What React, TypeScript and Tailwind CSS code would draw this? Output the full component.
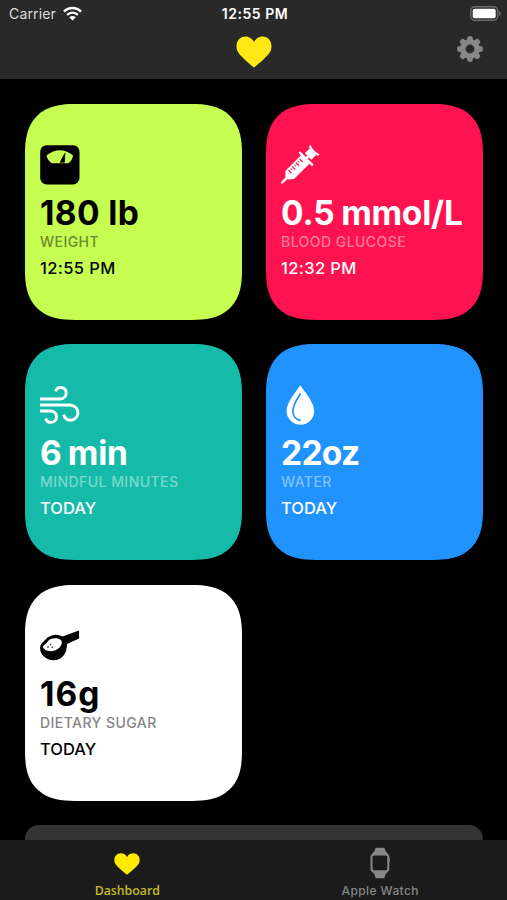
import type { ReactNode } from "react";

const HEART =
  "M18 31.5 C15.5 29.5 3 19.5 1.1 14.2 C-1.2 6.800 3.200 0.500 9.300 0.500 C13.500 0.500 16.700 3 18 6 C19.300 3 22.500 0.500 26.700 0.500 C32.800 0.500 37.200 6.800 34.900 14.200 C33 19.500 20.500 29.500 18 31.500 Z";

function Heart({ className }: { className: string }) {
  return (
    <svg viewBox="0 0 36 32" preserveAspectRatio="none" className={className}>
      <path d={HEART} fill="currentColor" />
    </svg>
  );
}

function Wifi() {
  return (
    <svg viewBox="0 0 18 14" className="ml-[7px] h-[15px] w-[19px]" fill="none" stroke="#fff">
      <path d="M0.900 5.200 C5.500 0.700 12.500 0.700 17.100 5.200" strokeWidth="2.500" />
      <path d="M3.900 8.300 C6.900 5.500 11.100 5.500 14.100 8.300" strokeWidth="2.300" />
      <path d="M9 13.600 L5.900 10.500 C7.700 8.900 10.300 8.900 12.100 10.500 Z" fill="#fff" stroke="none" />
    </svg>
  );
}

function Battery() {
  return (
    <svg viewBox="0 0 31 15" className="h-[15px] w-[31px]">
      <rect x="0.800" y="0.800" width="26.800" height="13.400" rx="4" fill="none" stroke="#6b6b6b" strokeWidth="1.400" />
      <rect x="2.700" y="2.700" width="23" height="9.600" rx="2" fill="#fff" />
      <path d="M28.900 5 Q31 6 31 7.500 Q31 9 28.900 10 Z" fill="#6b6b6b" />
    </svg>
  );
}

function Gear() {
  const angles = [0, 45, 90, 135, 180, 225, 270, 315];
  return (
    <svg viewBox="-13 -13 26 26" className="h-[26px] w-[26px]">
      <circle r="7.100" fill="none" stroke="#878787" strokeWidth="5.400" />
      {angles.map((a) => (
        <path
          key={a}
          d="M-3.300 -8.800 L-2.400 -12 Q-2.200 -12.800 -1.400 -12.800 L1.400 -12.800 Q2.200 -12.800 2.400 -12 L3.300 -8.800 Z"
          fill="#878787"
          transform={`rotate(${a})`}
        />
      ))}
    </svg>
  );
}

function ScaleIcon() {
  return (
    <svg viewBox="0 0 40 40" className="h-10 w-10">
      <rect x="0.200" y="0.200" width="39.300" height="39.300" rx="6.500" fill="#000" />
      <path d="M6.500 10.500 Q19.800 0 33.100 10.500 Q32.200 15.800 28.300 18.300 L11.900 18.300 Q7.600 15.800 6.500 10.500 Z" fill="#c5fd51" />
      <path d="M20.200 17.300 L24.900 8.300 L24.400 17.300 Z" fill="#000" stroke="#000" strokeWidth="0.800" strokeLinejoin="round" />
    </svg>
  );
}

function SyringeIcon() {
  return (
    <svg viewBox="0 0 40 40" className="h-10 w-10">
      <g transform="translate(0.300 38.400) rotate(-45) scale(0.960)" fill="#fff">
        <path d="M0 -1 L9.500 -1.500 L9.500 1.500 L0 1 Z" />
        <path d="M8 -2.200 L12.500 -6.200 H36 V6.200 H12.500 L8 2.200 Z" />
        <rect x="35.200" y="-10" width="2.400" height="20" rx="0.800" />
        <path d="M39.500 -4.800 H46.500 V4.800 H39.500 Z" />
        <rect x="37" y="-1.500" width="3" height="3" />
        <path d="M47 -6.800 H49.800 Q48.200 -3 48.200 0 Q48.200 3 49.800 6.800 H47 Z" />
        <rect x="45.500" y="-3.800" width="3" height="7.600" />
        <g stroke="#ff1250" strokeWidth="1.300">
          <path d="M15 -4.500 V0 M20.500 -4.500 V0 M26 -4.500 V0 M31.500 -4.500 V0" />
          <path d="M17.800 -4 V-2 M23.300 -4 V-2 M28.800 -4 V-2" strokeWidth="1" />
        </g>
      </g>
    </svg>
  );
}

function WindIcon() {
  return (
    <svg viewBox="0 0 40 40" className="h-10 w-10" fill="none" stroke="#fff" strokeWidth="2.900">
      <path d="M0 14 H20 C24 14 26.200 11 26.200 7.800 C26.200 4.500 23.700 2.500 20.800 2.500 C18.300 2.500 16.300 4 15.600 6.300" />
      <path d="M0 20 H29.500 C34.500 20 38 23.500 38 27.800 C38 32 34.600 35.200 30.700 35.200 C27.300 35.200 24.500 33 23.700 29.700" />
      <path d="M0 26 H10 C14.200 26 16.500 28.500 16.500 31.800 C16.500 35.100 14 37.400 11 37.400 C8.300 37.400 6.300 35.800 5.700 33.300" />
    </svg>
  );
}

function WaterIcon() {
  return (
    <svg viewBox="0 0 40 40" className="h-10 w-10">
      <path d="M19.300 0.300 C24 7.500 33.200 17.500 33.200 26 C33.200 34 27 39.700 19.500 39.700 C12 39.700 5.600 34 5.600 26 C5.600 17.500 14.700 7.500 19.300 0.300 Z" fill="#fff" />
      <path d="M19.300 9 C14 17 11.500 21.500 11.900 26.500 C12.300 31.500 15.300 34.500 19 35.300" fill="none" stroke="#2492ff" strokeWidth="1.700" strokeLinecap="round" />
    </svg>
  );
}

function SpoonIcon() {
  return (
    <svg viewBox="0 0 40 40" className="h-10 w-10">
      <path d="M1 18 L7.500 11.500 Q15 6.500 22.500 10.500 L38.200 4.800 Q39.100 4.600 39.100 5.500 V12.500 L27 18 C27 28.500 21.500 34.200 13.300 34.200 C4.500 34.200 -2.500 26 1 18 Z" fill="#000" />
      <path d="M2.700 20.800 C4.200 18.500 6.200 17.800 7.700 15.500 C10.200 12 17 11.300 20.500 13.800 C24 16.500 20.500 22.500 15 24.500 C9.500 26.200 3.700 24.500 2.700 20.800 Z" fill="#fff" />
      <g fill="#555">
        <circle cx="10.600" cy="18.300" r="0.900" />
        <circle cx="8" cy="21" r="0.900" />
        <circle cx="12.300" cy="21.200" r="0.900" />
      </g>
    </svg>
  );
}

function WatchIcon() {
  return (
    <svg viewBox="0 0 20 32" className="h-8 w-5">
      <path d="M5.600 0.700 H14.400 Q15.300 5 17.800 6.500 V25 Q15.300 26.500 14.400 31.300 H5.600 Q4.700 26.500 2.200 25 V6.500 Q4.700 5 5.600 0.700 Z" fill="#878787" />
      <rect x="1.500" y="7.500" width="16.800" height="16.800" rx="2.600" fill="#1b1b1b" stroke="#878787" strokeWidth="2" />
      <path d="M19.500 11 V15" stroke="#878787" strokeWidth="0.800" />
    </svg>
  );
}

interface CardProps {
  icon: ReactNode;
  value: string;
  label: string;
  time: string;
  tone: string;
  muted: string;
  valueSpacing: string;
  timeSpacing: string;
}

function Card({ icon, value, label, time, tone, muted, valueSpacing, timeSpacing }: CardProps) {
  return (
    <section
      className={`h-[216px] rounded-[50px] pt-[41px] pl-[15px] whitespace-nowrap [corner-shape:superellipse(1.35)] ${tone}`}
    >
      {icon}
      <p className={`mt-[8px] h-10 text-[33.500px] leading-10 font-bold ${valueSpacing}`}>{value}</p>
      <p className={`h-[18px] text-[14px] leading-[18px] font-medium tracking-[0.450px] ${muted}`}>{label}</p>
      <p className={`mt-[5px] h-6 text-[16.500px] leading-6 font-medium ${timeSpacing}`}>{time}</p>
    </section>
  );
}

export default function App() {
  return (
    <div className="flex h-[900px] w-[507px] flex-col overflow-hidden bg-black font-['Inter','Liberation_Sans',sans-serif]">
      <header className="h-[79px] shrink-0 bg-[#292929]">
        <div className="grid h-[27px] grid-cols-[1fr_auto_1fr] items-center pr-[6px] pl-[9px] text-[14px] text-white">
          <div className="flex items-center text-[#dedede]">
            <span className="tracking-[0.150px]">Carrier</span>
            <Wifi />
          </div>
          <span className="text-center font-semibold tracking-[0.550px]">12:55 PM</span>
          <div className="flex justify-end">
            <Battery />
          </div>
        </div>
        <div className="grid h-[50px] grid-cols-3 items-center pr-6 pl-6">
          <span />
          <Heart className="h-8 w-9 justify-self-center text-[#ffe815]" />
          <div className="flex justify-end pb-[6px]">
            <Gear />
          </div>
        </div>
      </header>

      <main className="min-h-0 flex-1 overflow-hidden px-[25px] pt-[25px]">
        <div className="grid grid-cols-[217px_217px] gap-x-[24px] gap-y-[24.400px]">
          <Card icon={<ScaleIcon />} value="180 lb" label="WEIGHT" time="12:55 PM" tone="bg-[#c5fd51] text-black" muted="text-[#6d8b31]" valueSpacing="tracking-[0.400px]" timeSpacing="tracking-[0.400px]" />
          <Card icon={<SyringeIcon />} value="0.5 mmol/L" label="BLOOD GLUCOSE" time="12:32 PM" tone="bg-[#ff1250] text-white" muted="text-[#ff7b9b]" valueSpacing="tracking-[-0.200px] [word-spacing:-1px]" timeSpacing="tracking-[0.400px]" />
          <Card icon={<WindIcon />} value="6 min" label="MINDFUL MINUTES" time="TODAY" tone="bg-[#15bba8] text-white" muted="text-[#7bd9ce]" valueSpacing="tracking-[-0.200px] [word-spacing:-1.500px]" timeSpacing="" />
          <Card icon={<WaterIcon />} value="22oz" label="WATER" time="TODAY" tone="bg-[#2093ff] text-white" muted="text-[#83c2ff]" valueSpacing="tracking-[-0.700px]" timeSpacing="" />
          <Card icon={<SpoonIcon />} value="16g" label="DIETARY SUGAR" time="TODAY" tone="bg-white text-black" muted="text-[#868686]" valueSpacing="tracking-[1px]" timeSpacing="" />
          <div className="col-span-2 h-[120px] rounded-[14px] bg-[#343434]" />
        </div>
      </main>

      <nav className="grid h-[60px] shrink-0 grid-cols-2 bg-[#1b1b1b]">
        <div className="flex flex-col items-center pt-[13px] text-[#ffe900]">
          <Heart className="h-[22px] w-[26px]" />
          <span className="mt-[8px] ml-px font-['Open_Sans','Noto_Sans',sans-serif] text-[12.300px] leading-4 font-semibold text-[#c9bd1b]">Dashboard</span>
        </div>
        <div className="flex flex-col items-center pt-[7px] text-[#878787]">
          <WatchIcon />
          <span className="mt-[4px] text-[12px] leading-4 font-medium tracking-[0.400px]">Apple Watch</span>
        </div>
      </nav>
    </div>
  );
}
